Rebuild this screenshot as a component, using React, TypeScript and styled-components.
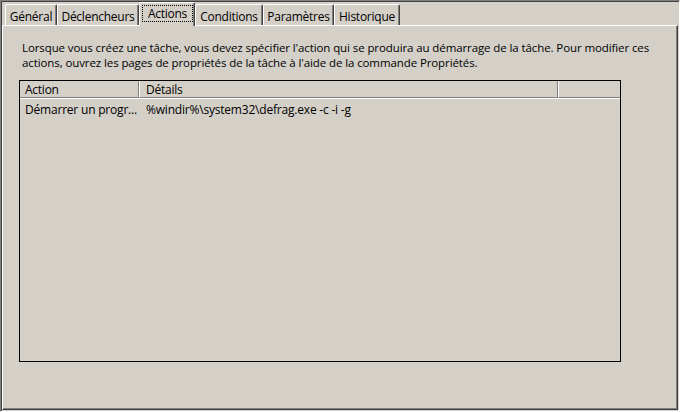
import React from "react";
import styled, { createGlobalStyle } from "styled-components";

const GlobalStyle = createGlobalStyle`
  html, body {
    margin: 0;
    padding: 0;
    background: #d4d0c8;
  }
  body {
    font-family: "Open Sans", "Noto Sans", "DejaVu Sans", sans-serif;
    font-size: 12px;
    color: #000;
  }
`;

const Frame = styled.div`
  width: 680px;
  height: 412px;
  box-sizing: border-box;
  background: #d4d0c8;
  border-top: 1px solid #808080;
  border-left: 1px solid #808080;
  border-right: 1px solid #ffffff;
  border-bottom: 1px solid #ffffff;
  box-shadow: inset 1px 1px 0 #404040;
  padding: 1px 1px 1px 1px;
  display: flex;
  flex-direction: column;
  overflow: hidden;
`;

const TabStrip = styled.div`
  height: 23px;
  flex: none;
  display: flex;
  align-items: flex-end;
  padding-left: 3px;
  position: relative;
  z-index: 1;
`;

const Tab = styled.div<{ $w: number; $active?: boolean }>`
  box-sizing: border-box;
  width: ${(p) => p.$w}px;
  height: ${(p) => (p.$active ? 24 : 21)}px;
  margin-bottom: ${(p) => (p.$active ? -1 : 0)}px;
  padding-top: ${(p) => (p.$active ? 2 : 4)}px;
  background: #d4d0c8;
  border-top: 1px solid #ffffff;
  border-left: 1px solid #ffffff;
  border-right: 1px solid #404040;
  border-radius: 2px 2px 0 0;
  box-shadow: inset -1px 0 0 #808080;
  text-align: center;
  line-height: 15px;
  white-space: nowrap;
  letter-spacing: -0.25px;
`;

const FocusLabel = styled.span`
  display: block;
  margin: 0 1px 0 2px;
  border: 1px dotted #000;
  line-height: 15px;
`;

const Panel = styled.div`
  flex: 1;
  box-sizing: border-box;
  border-top: 1px solid #ffffff;
  border-left: 1px solid #ffffff;
  border-right: 1px solid #404040;
  border-bottom: 1px solid #404040;
  box-shadow: inset -1px -1px 0 #808080;
  padding: 14px 0 0 16px;
  display: flex;
  flex-direction: column;
`;

const Intro = styled.div`
  margin: 0 0 10px 0;
  padding-left: 3px;
  display: flex;
  flex-direction: column;
`;

const IntroLine = styled.span`
  display: block;
  height: 15px;
  line-height: 15px;
  font-size: 11.5px;
  white-space: nowrap;
  letter-spacing: -0.1px;
`;

const List = styled.div`
  width: 602px;
  height: 282px;
  box-sizing: border-box;
  border: 1px solid #000;
  display: flex;
  flex-direction: column;
`;

const HeaderRow = styled.div`
  display: grid;
  grid-template-columns: 119px 419px 62px;
  border-bottom: 1px solid #ffffff;
`;

const HeaderCell = styled.div<{ $first?: boolean; $pad: number }>`
  box-sizing: border-box;
  height: 17px;
  padding: 1px 0 0 ${(p) => p.$pad}px;
  line-height: 15px;
  border-bottom: 1px solid #808080;
  border-right: 1px solid #808080;
  border-left: ${(p) => (p.$first ? "none" : "1px solid #ffffff")};
  white-space: nowrap;
  letter-spacing: -0.25px;
`;

const LastHeaderCell = styled(HeaderCell)`
  border-right: none;
`;

const Row = styled.div`
  display: grid;
  grid-template-columns: 119px 419px 62px;
  padding-top: 3px;
  line-height: 15px;
`;

const Cell = styled.div<{ $pad: number }>`
  padding-left: ${(p) => p.$pad}px;
  white-space: nowrap;
  overflow: hidden;
  letter-spacing: -0.2px;
`;

const tabs = [
  { label: "Général", w: 52 },
  { label: "Déclencheurs", w: 82 },
  { label: "Actions", w: 56, active: true },
  { label: "Conditions", w: 68 },
  { label: "Paramètres", w: 71 },
  { label: "Historique", w: 66 },
];

export default function App() {
  return (
    <>
      <GlobalStyle />
      <Frame>
        <TabStrip>
          {tabs.map((t) =>
            t.active ? (
              <Tab key={t.label} $w={t.w} $active>
                <FocusLabel>{t.label}</FocusLabel>
              </Tab>
            ) : (
              <Tab key={t.label} $w={t.w}>
                {t.label}
              </Tab>
            )
          )}
        </TabStrip>
        <Panel>
          <Intro>
            <IntroLine>
              Lorsque vous créez une tâche, vous devez spécifier l'action qui se produira au démarrage de la tâche. Pour modifier ces
            </IntroLine>
            <IntroLine>
              actions, ouvrez les pages de propriétés de la tâche à l'aide de la commande Propriétés.
            </IntroLine>
          </Intro>
          <List>
            <HeaderRow>
              <HeaderCell $first $pad={5}>Action</HeaderCell>
              <HeaderCell $pad={6}>Détails</HeaderCell>
              <LastHeaderCell $pad={6}></LastHeaderCell>
            </HeaderRow>
            <Row>
              <Cell $pad={5}>Démarrer un progr...</Cell>
              <Cell $pad={7}>%windir%\system32\defrag.exe -c -i -g</Cell>
              <Cell $pad={6}></Cell>
            </Row>
          </List>
        </Panel>
      </Frame>
    </>
  );
}
